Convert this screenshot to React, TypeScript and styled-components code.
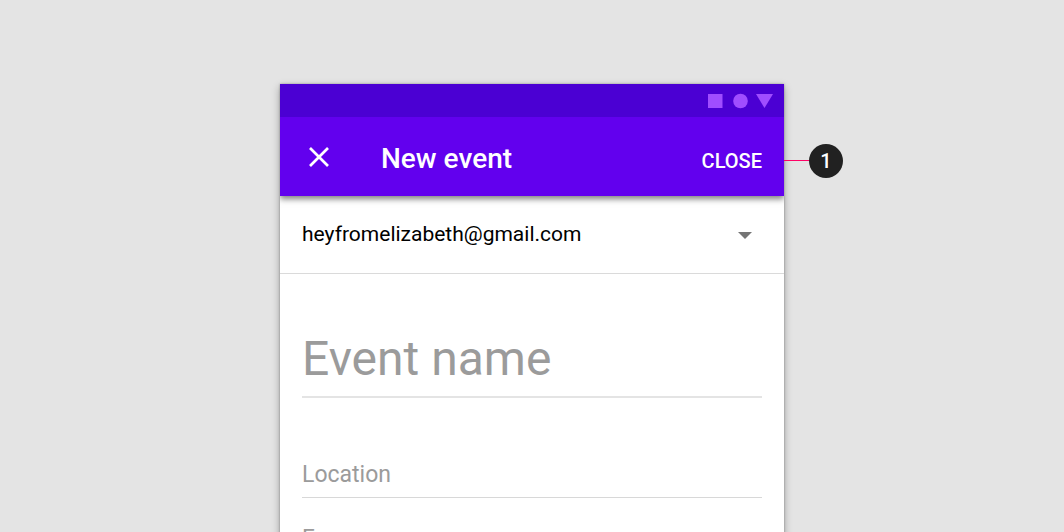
import React from "react";
import styled, { createGlobalStyle } from "styled-components";

const GlobalStyle = createGlobalStyle`
  *, *::before, *::after { box-sizing: border-box; }
  body {
    margin: 0;
    background: #e4e4e4;
    font-family: Roboto, "Liberation Sans", sans-serif;
  }
`;

const Stage = styled.main`
  display: flex;
  justify-content: center;
  height: 100vh;
  padding: 84px 24px 0;
  overflow: hidden;
`;

const Phone = styled.section`
  position: relative;
  width: 100%;
  max-width: 504px;
  min-height: 640px;
  background: #fff;
  box-shadow: 0 0 2px rgba(0, 0, 0, 0.3), 0 3px 8px rgba(0, 0, 0, 0.32);
`;

const StatusBar = styled.div`
  display: flex;
  justify-content: flex-end;
  align-items: center;
  height: 33px;
  padding-right: 10px;
  background: #4b00d3;
`;

const AppBar = styled.header`
  display: flex;
  align-items: center;
  height: 79px;
  padding: 0 22px;
  color: #fff;
  background: #6200ee;
  box-shadow: 0 3px 6px rgba(0, 0, 0, 0.5);
  clip-path: inset(0 0 -12px 0);
`;

const BarButton = styled.button`
  display: flex;
  margin: 0;
  padding: 0;
  border: 0;
  background: none;
  color: inherit;
  font: 500 20px/24px Roboto, "Liberation Sans", sans-serif;
  cursor: pointer;
`;

const Title = styled.h1`
  flex: 1;
  margin: 0 0 0 45px;
  padding-top: 4px;
  font-size: 28px;
  line-height: 36px;
  font-weight: 500;
`;

const CloseAction = styled(BarButton)`
  padding-top: 8px;
`;

const AccountRow = styled.label`
  display: flex;
  align-items: center;
  height: 78px;
  padding: 0 32px 0 22px;
  border-bottom: 1px solid #dadada;
`;

const AccountSelect = styled.select`
  flex: 1;
  min-width: 0;
  height: 32px;
  margin: 0;
  padding: 0 0 2px;
  border: 0;
  appearance: none;
  background: none;
  color: #000;
  font: 400 21px Roboto, "Liberation Sans", sans-serif;
`;

const Form = styled.form`
  display: flex;
  flex-direction: column;
  padding: 44px 22px 0;
`;

const TextField = styled.input<{ $large?: boolean }>`
  width: 100%;
  height: ${(p) => (p.$large ? "80px" : "48px")};
  margin: 0 0 ${(p) => (p.$large ? "52px" : "16px")};
  padding: 2px 0 0;
  border: 0;
  border-bottom: ${(p) => (p.$large ? "2px" : "1px")} solid ${(p) => (p.$large ? "#e4e4e4" : "#d8d8d8")};
  border-radius: 0;
  outline: 0;
  background: none;
  color: #212121;
  font: 400 ${(p) => (p.$large ? "48px" : "23px")} Roboto, "Liberation Sans", sans-serif;
  &::placeholder { color: #9b9b9b; opacity: 1; }
`;

const Callout = styled.div`
  position: absolute;
  top: 60px;
  left: 100%;
  display: flex;
  align-items: center;
`;

const Leader = styled.span`
  width: 25px;
  height: 2px;
  border-top: 1px solid #ff0266;
`;

const Badge = styled.span`
  width: 34px;
  height: 34px;
  border-radius: 50%;
  background: #212121;
  color: #fff;
  font-size: 20px;
  line-height: 34px;
  font-weight: 500;
  text-align: center;
`;

export default function App() {
  return (
    <Stage>
      <GlobalStyle />
      <Phone>
        <StatusBar>
          <svg width="66" height="16" viewBox="0 0 66 16" fill="#a04dff" aria-hidden="true">
            <path d="M0 1h14.5v14H0z" />
            <circle cx="32.5" cy="8" r="7.3" />
            <path d="M48 1h17l-8.5 14z" />
          </svg>
        </StatusBar>
        <AppBar>
          <BarButton type="button" aria-label="Dismiss">
            <svg width="34" height="34" viewBox="0 0 34 34" fill="none" stroke="#fff" strokeWidth="2.7">
              <path d="M8 8l18 18M26 8L8 26" />
            </svg>
          </BarButton>
          <Title>New event</Title>
          <CloseAction type="button">CLOSE</CloseAction>
        </AppBar>
        <AccountRow>
          <AccountSelect aria-label="Account">
            <option>heyfromelizabeth@gmail.com</option>
          </AccountSelect>
          <svg width="14" height="8" viewBox="0 0 14 8" fill="#757575" aria-hidden="true">
            <path d="M0 1h14L7 8z" />
          </svg>
        </AccountRow>
        <Form>
          <TextField $large aria-label="Event name" placeholder="Event name" />
          <TextField aria-label="Location" placeholder="Location" />
          <TextField aria-label="From" placeholder="From" />
        </Form>
        <Callout>
          <Leader />
          <Badge>1</Badge>
        </Callout>
      </Phone>
    </Stage>
  );
}
